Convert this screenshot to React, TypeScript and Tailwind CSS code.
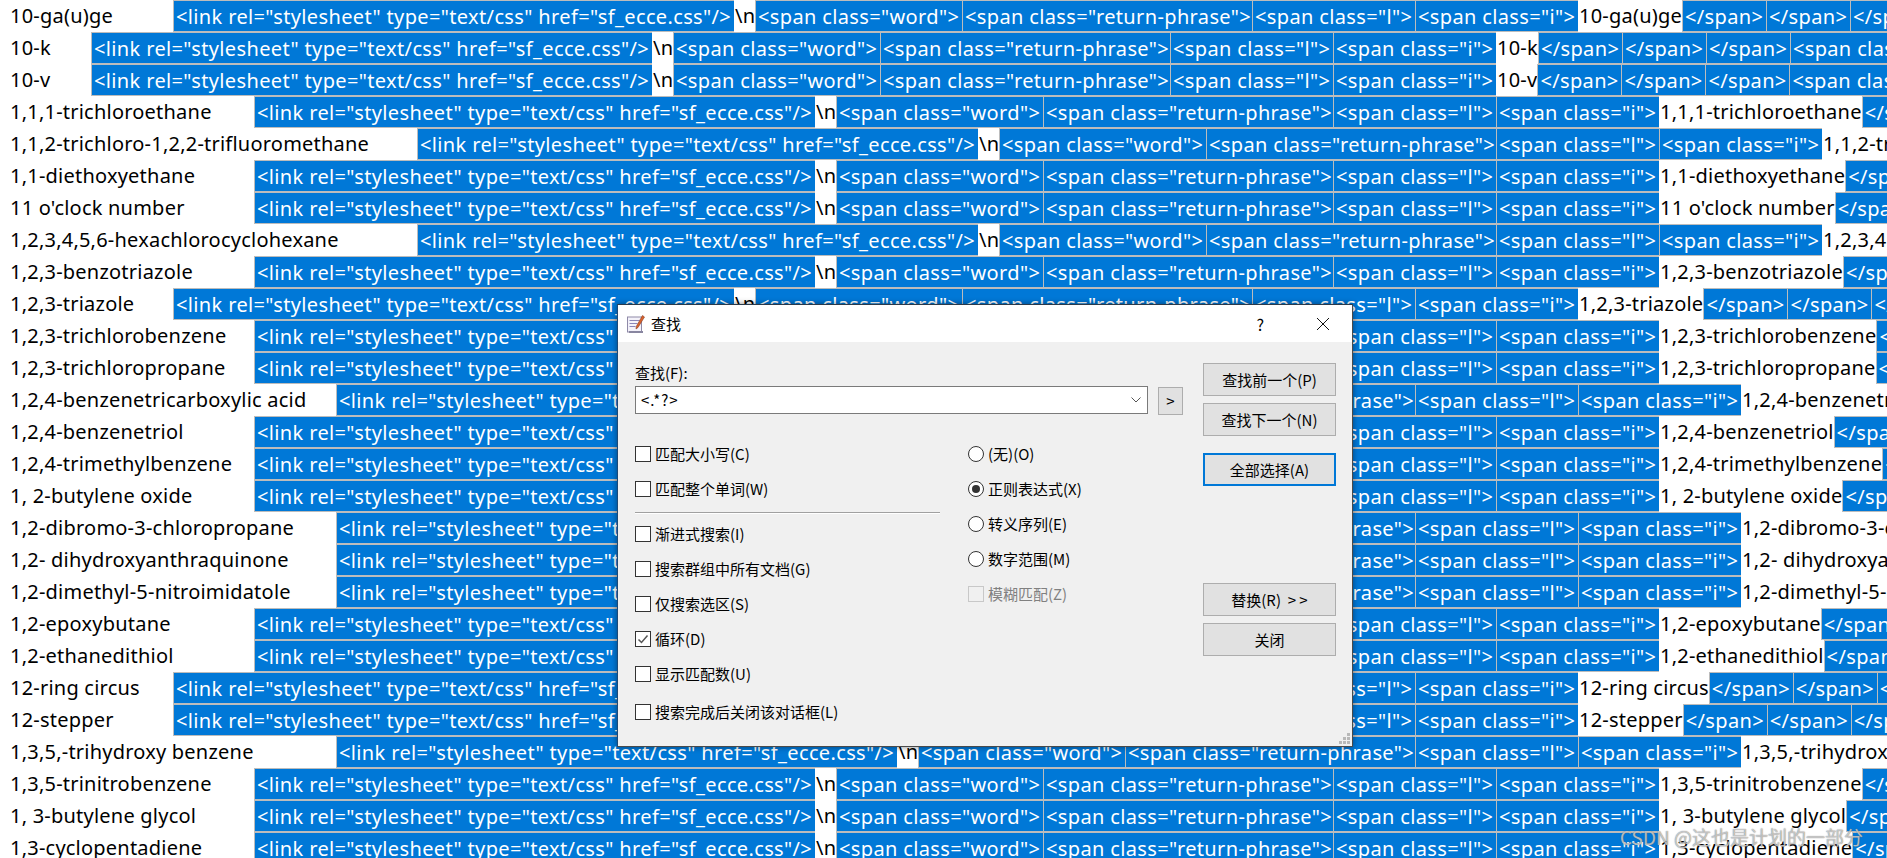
const rows: [string, string][] = [
  ["10-ga(u)ge", "w-[173px]"],
  ["10-k", "w-[91px]"],
  ["10-v", "w-[91px]"],
  ["1,1,1-trichloroethane", "w-[254px]"],
  ["1,1,2-trichloro-1,2,2-trifluoromethane", "w-[417px]"],
  ["1,1-diethoxyethane", "w-[254px]"],
  ["11 o'clock number", "w-[254px]"],
  ["1,2,3,4,5,6-hexachlorocyclohexane", "w-[417px]"],
  ["1,2,3-benzotriazole", "w-[254px]"],
  ["1,2,3-triazole", "w-[173px]"],
  ["1,2,3-trichlorobenzene", "w-[254px]"],
  ["1,2,3-trichloropropane", "w-[254px]"],
  ["1,2,4-benzenetricarboxylic acid", "w-[336px]"],
  ["1,2,4-benzenetriol", "w-[254px]"],
  ["1,2,4-trimethylbenzene", "w-[254px]"],
  ["1, 2-butylene oxide", "w-[254px]"],
  ["1,2-dibromo-3-chloropropane", "w-[336px]"],
  ["1,2- dihydroxyanthraquinone", "w-[336px]"],
  ["1,2-dimethyl-5-nitroimidatole", "w-[336px]"],
  ["1,2-epoxybutane", "w-[254px]"],
  ["1,2-ethanedithiol", "w-[254px]"],
  ["12-ring circus", "w-[173px]"],
  ["12-stepper", "w-[173px]"],
  ["1,3,5,-trihydroxy benzene", "w-[336px]"],
  ["1,3,5-trinitrobenzene", "w-[254px]"],
  ["1, 3-butylene glycol", "w-[254px]"],
  ["1,3-cyclopentadiene", "w-[254px]"],
];

const Tok = ({ children, w }: { children: string; w: string }) => (
  <span className={`h-8 shrink-0 overflow-hidden border-y border-l border-[#bcbcbc] bg-[#0078d7] pl-[2px] tracking-[0.36px] text-white ${w}`}>
    {children}
  </span>
);

const Row = ({ name, stop }: { name: string; stop: string }) => (
  <div className="flex h-8 w-[1887px] overflow-hidden whitespace-pre text-[20px] leading-[32px] tracking-[0.22px] text-black">
    <span className={`shrink-0 pl-[10px] ${stop}`}>{name}</span>
    <Tok w="w-[561px]">{'<link rel="stylesheet" type="text/css" href="sf_ecce.css"/>'}</Tok>
    <span className="w-[21px] shrink-0 pl-[1px]">\n</span>
    <Tok w="w-[207px]">{'<span class="word">'}</Tok>
    <Tok w="w-[290px]">{'<span class="return-phrase">'}</Tok>
    <Tok w="w-[163px]">{'<span class="l">'}</Tok>
    <Tok w="w-[163px]">{'<span class="i">'}</Tok>
    <span className="shrink-0 pl-[1px]">{name}</span>
    <Tok w="w-[84px]">{"</span>"}</Tok>
    <Tok w="w-[84px]">{"</span>"}</Tok>
    <Tok w="w-[84px]">{"</span>"}</Tok>
    <Tok w="w-[207px]">{'<span class="word">'}</Tok>
  </div>
);

const Check = ({ label, checked, className = "" }: { label: string; checked?: boolean; className?: string }) => (
  <div className={`flex h-[35px] items-center gap-1 ${className}`}>
    <span className="flex size-4 items-center justify-center border border-[#333] bg-white">
      {checked && (
        <svg width="12" height="12" viewBox="0 0 12 12" fill="none" stroke="#555" strokeWidth="1.5">
          <path d="M1.5 6.5 4.5 9.5 10.5 2.5" />
        </svg>
      )}
    </span>
    <span>{label}</span>
  </div>
);

const Radio = ({ label, on }: { label: string; on?: boolean }) => (
  <div className="flex h-[35px] items-center gap-1">
    <span className="flex size-4 items-center justify-center rounded-full border border-[#333] bg-white">
      {on && <span className="size-2 rounded-full bg-[#333]" />}
    </span>
    <span>{label}</span>
  </div>
);

const Btn = ({ label, className = "border border-[#adadad]" }: { label: string; className?: string }) => (
  <button className={`flex h-[33px] w-[133px] shrink-0 items-center justify-center bg-[#e1e1e1] ${className}`}>
    {label}
  </button>
);

const FindDialog = () => (
  <div
    className="absolute left-[617px] top-[304px] flex h-[443px] w-[736px] flex-col border border-t-[#2b3a4a] border-r-[#4a4a4a] border-b-[#4a4a4a] border-l-[#1c4a78] bg-[#f0f0f0] text-[15px] leading-5 text-black shadow-[0_0_6px_rgba(0,0,0,0.45)]"
    style={{ fontFamily: '"Noto Sans CJK SC", "Noto Sans", sans-serif' }}
  >
    <div className="flex h-[37px] shrink-0 items-center bg-white pl-2">
      <svg width="20" height="20" viewBox="0 0 20 20" className="shrink-0">
        <rect x="1.5" y="3" width="14" height="15" fill="#f4f2fa" stroke="#8f8aa8" />
        <rect x="3" y="17" width="14" height="2" fill="#8886a0" />
        <path d="M3.5 6.5h10M3.5 9.5h8M3.5 12.5h6" stroke="#8a86b8" />
        <path d="M16.5 1.5 18.5 3 12 13.5 10 15l.3-2.6z" fill="#d9622c" stroke="#8a3d22" strokeWidth=".6" />
      </svg>
      <span className="ml-[5px]">查找</span>
      <span className="ml-auto mr-[52px] text-[16px]">?</span>
      <svg width="14" height="14" viewBox="0 0 14 14" stroke="#111" strokeWidth="1" className="mr-[22px]">
        <path d="M1 1 13 13M13 1 1 13" />
      </svg>
    </div>
    <div className="flex flex-1">
      <div className="ml-[17px] w-[548px]">
        <div className="mt-[21px] h-[23px]">查找(F):</div>
        <div className="flex items-start">
          <div className="flex h-7 w-[513px] items-center border border-[#7a7a7a] bg-white pl-[5px] pr-[5px]">
            <span className="tracking-[1px]">{"<.*?>"}</span>
            <svg width="12" height="8" viewBox="0 0 12 8" fill="none" stroke="#555" className="ml-auto">
              <path d="M1.5 1.5 6 6l4.5-4.5" />
            </svg>
          </div>
          <button className="ml-[10px] mt-px h-7 w-[25px] border border-[#adadad] bg-[#e1e1e1]">&gt;</button>
        </div>
        <div className="mt-[21px] flex">
          <div className="w-[333px]">
            <Check label="匹配大小写(C)" />
            <Check label="匹配整个单词(W)" />
            <div className="mb-[2px] mr-[28px] mt-[6px] h-[2px] border-y border-t-[#a0a0a0] border-b-white" />
            <Check label="渐进式搜索(I)" />
            <Check label="搜索群组中所有文档(G)" />
            <Check label="仅搜索选区(S)" />
            <Check label="循环(D)" checked />
            <Check label="显示匹配数(U)" />
            <Check label="搜索完成后关闭该对话框(L)" className="mt-[3px]" />
          </div>
          <div>
            <Radio label="(无)(O)" />
            <Radio label="正则表达式(X)" on />
            <Radio label="转义序列(E)" />
            <Radio label="数字范围(M)" />
            <div className="flex h-[35px] items-center gap-1 text-[#808080]">
              <span className="size-4 border border-[#c8c8c8] bg-[#f0f0f0]" />
              <span>模糊匹配(Z)</span>
            </div>
          </div>
        </div>
      </div>
      <div className="ml-[20px] flex flex-col pt-[21px]">
        <Btn label="查找前一个(P)" />
        <Btn label="查找下一个(N)" className="mt-[7px] border border-[#adadad]" />
        <Btn label="全部选择(A)" className="mt-[17px] border-2 border-[#0078d7]" />
        <Btn label="替换(R)  > >" className="mt-[97px] whitespace-pre border border-[#adadad]" />
        <Btn label="关闭" className="mt-[7px] border border-[#adadad]" />
      </div>
    </div>
    <div className="absolute bottom-[2px] right-[2px] grid grid-cols-3 gap-px">
      <span className="col-start-3 size-[3px] bg-[#b8b8b8]" />
      <span className="col-start-2 size-[3px] bg-[#b8b8b8]" />
      <span className="size-[3px] bg-[#b8b8b8]" />
      <span className="size-[3px] bg-[#b8b8b8]" />
      <span className="size-[3px] bg-[#b8b8b8]" />
      <span className="size-[3px] bg-[#b8b8b8]" />
    </div>
  </div>
);

export default function App() {
  return (
    <div className="relative h-[858px] w-[1887px] overflow-hidden bg-white" style={{ fontFamily: '"Noto Sans", sans-serif' }}>
      {rows.map(([name, stop]) => (
        <Row key={name} name={name} stop={stop} />
      ))}
      <FindDialog />
      <div
        className="absolute left-[1620px] top-[826px] whitespace-nowrap text-[19px] leading-[22px] text-white/60 [text-shadow:0_0_1px_#555]"
        style={{ fontFamily: '"Noto Sans CJK SC", sans-serif' }}
      >
        CSDN @这也是计划的一部分
      </div>
    </div>
  );
}
